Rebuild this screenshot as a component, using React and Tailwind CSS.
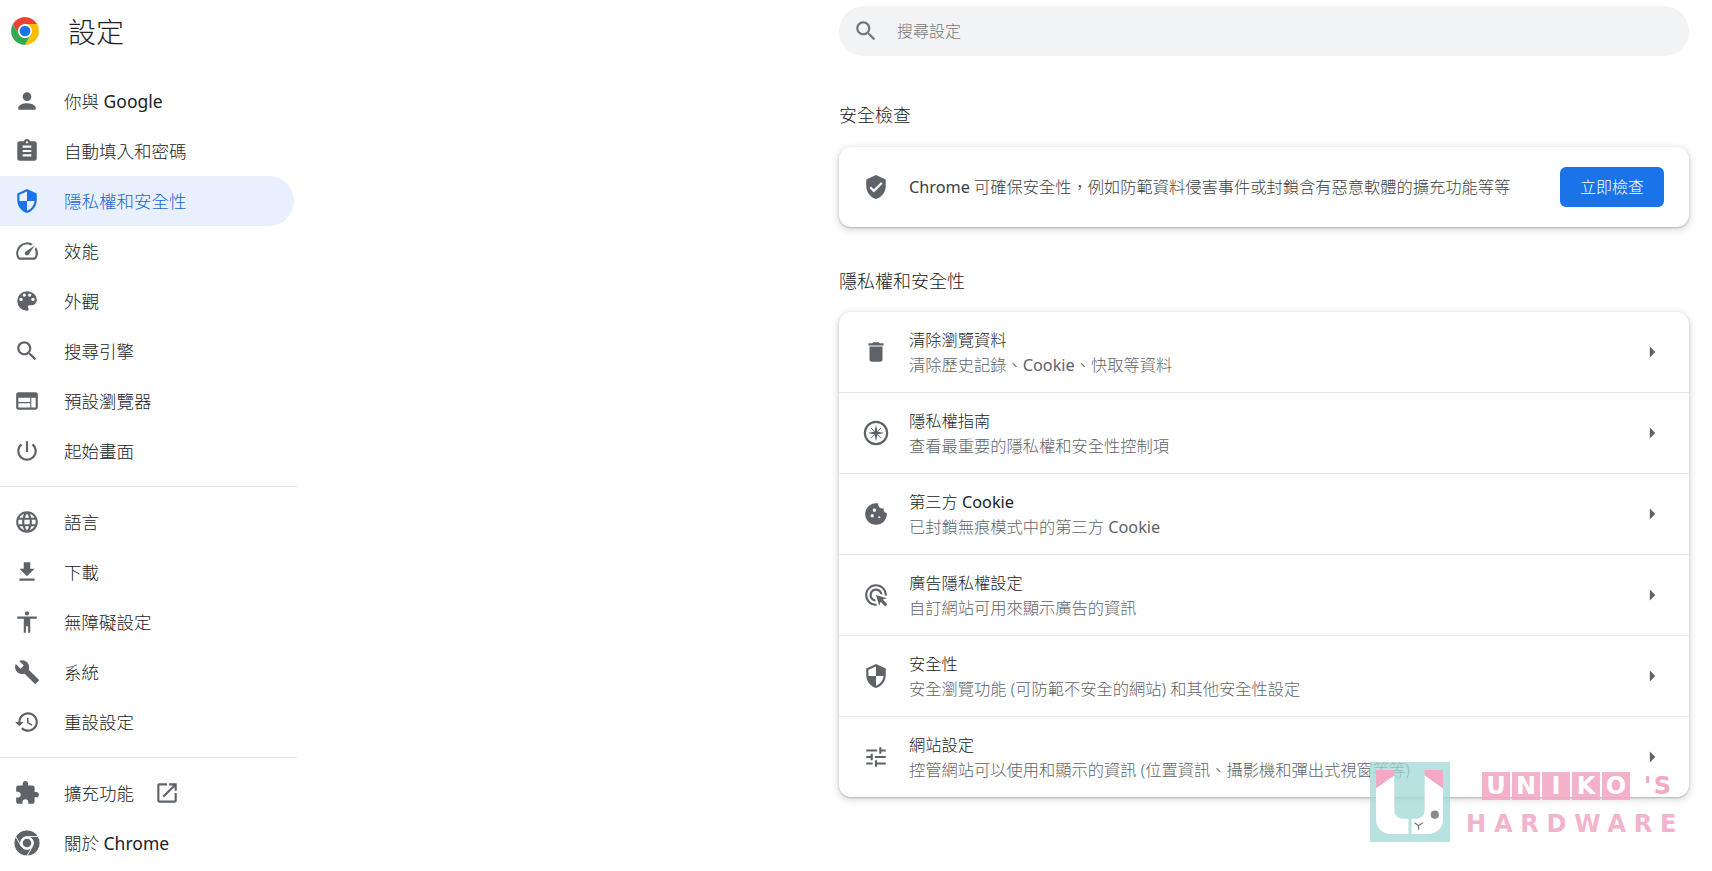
import { Fragment } from "react";

const ICONS = {
  person: "M12 12c2.21 0 4-1.79 4-4s-1.79-4-4-4-4 1.79-4 4 1.79 4 4 4zm0 2c-2.67 0-8 1.34-8 4v2h16v-2c0-2.66-5.33-4-8-4z",
  assignment: "M19 3h-4.18C14.4 1.84 13.3 1 12 1c-1.3 0-2.4.84-2.82 2H5c-1.1 0-2 .9-2 2v14c0 1.1.9 2 2 2h14c1.1 0 2-.9 2-2V5c0-1.1-.9-2-2-2zm-7 0c.55 0 1 .45 1 1s-.45 1-1 1-1-.45-1-1 .45-1 1-1zm4 14H8v-2h8v2zm0-4H8v-2h8v2zm0-4H8V7h8v2z",
  security: "M12 1L3 5v6c0 5.55 3.84 10.74 9 12 5.16-1.26 9-6.45 9-12V5l-9-4zm0 10.99h7c-.53 4.12-3.28 7.79-7 8.94V12H5V6.3l7-3.11v8.8z",
  speed: "M20.38 8.57l-1.23 1.85a8 8 0 0 1-.22 7.58H5.07A8 8 0 0 1 15.58 6.85l1.85-1.23A10 10 0 0 0 3.35 19a2 2 0 0 0 1.72 1h13.85a2 2 0 0 0 1.74-1 10 10 0 0 0-.27-10.44zm-9.79 6.84a2 2 0 0 0 2.83 0l5.66-8.49-8.49 5.66a2 2 0 0 0 0 2.83z",
  palette: "M12 3a9 9 0 0 0 0 18c.83 0 1.5-.67 1.5-1.5 0-.39-.15-.74-.39-1.01-.23-.26-.38-.61-.38-.99 0-.83.67-1.5 1.5-1.5H16c2.76 0 5-2.24 5-5 0-4.42-4.03-8-9-8zm-5.5 9c-.83 0-1.5-.67-1.5-1.5S5.67 9 6.5 9 8 9.67 8 10.5 7.33 12 6.5 12zm3-4C8.67 8 8 7.33 8 6.5S8.67 5 9.5 5s1.5.67 1.5 1.5S10.33 8 9.5 8zm5 0c-.83 0-1.5-.67-1.5-1.5S13.67 5 14.5 5s1.5.67 1.5 1.5S15.33 8 14.5 8zm3 4c-.83 0-1.5-.67-1.5-1.5S16.67 9 17.5 9s1.5.67 1.5 1.5-.67 1.5-1.5 1.5z",
  search: "M15.5 14h-.79l-.28-.27C15.41 12.59 16 11.11 16 9.5 16 5.91 13.09 3 9.5 3S3 5.91 3 9.5 5.91 16 9.5 16c1.61 0 3.09-.59 4.23-1.57l.27.28v.79l5 4.99L20.49 19l-4.99-5zm-6 0C7.01 14 5 11.99 5 9.5S7.01 5 9.5 5 14 7.01 14 9.5 11.99 14 9.5 14z",
  web: "M20 4H4c-1.1 0-1.99.9-1.99 2L2 18c0 1.1.9 2 2 2h16c1.1 0 2-.9 2-2V6c0-1.1-.9-2-2-2zm-5 14H4v-4h11v4zm0-5H4V9h11v4zm5 5h-4V9h4v9z",
  power: "M13 3h-2v10h2V3zm4.83 2.17l-1.42 1.42C17.99 7.86 19 9.81 19 12c0 3.87-3.13 7-7 7s-7-3.13-7-7c0-2.19 1.01-4.14 2.58-5.42L6.17 5.17C4.23 6.82 3 9.26 3 12c0 4.97 4.03 9 9 9s9-4.03 9-9c0-2.74-1.23-5.18-3.17-6.83z",
  language: "M11.99 2C6.47 2 2 6.48 2 12s4.47 10 9.99 10C17.52 22 22 17.52 22 12S17.52 2 11.99 2zm6.93 6h-2.95c-.32-1.25-.78-2.45-1.38-3.56 1.84.63 3.37 1.91 4.33 3.56zM12 4.04c.83 1.2 1.48 2.53 1.91 3.96h-3.82c.43-1.43 1.08-2.76 1.91-3.96zM4.26 14C4.1 13.36 4 12.69 4 12s.1-1.36.26-2h3.38c-.08.66-.14 1.32-.14 2 0 .68.06 1.34.14 2H4.26zm.82 2h2.95c.32 1.25.78 2.45 1.38 3.56-1.84-.63-3.37-1.9-4.33-3.56zm2.95-8H5.08c.96-1.66 2.49-2.93 4.33-3.56C8.81 5.55 8.35 6.75 8.03 8zM12 19.96c-.83-1.2-1.48-2.53-1.91-3.96h3.82c-.43 1.43-1.08 2.76-1.91 3.96zM14.34 14H9.66c-.09-.66-.16-1.32-.16-2 0-.68.07-1.35.16-2h4.68c.09.65.16 1.32.16 2 0 .68-.07 1.34-.16 2zm.25 5.56c.6-1.11 1.06-2.31 1.38-3.56h2.95c-.96 1.65-2.49 2.93-4.33 3.56zM16.36 14c.08-.66.14-1.32.14-2 0-.68-.06-1.34-.14-2h3.38c.16.64.26 1.31.26 2s-.1 1.36-.26 2h-3.38z",
  download: "M19 9h-4V3H9v6H5l7 7 7-7zM5 18v2h14v-2H5z",
  accessibility: "M12 2c1.1 0 2 .9 2 2s-.9 2-2 2-2-.9-2-2 .9-2 2-2zm9 7h-6v13h-2v-6h-2v6H9V9H3V7h18v2z",
  build: "M22.7 19l-9.1-9.1c.9-2.3.4-5-1.5-6.9-2-2-5-2.4-7.4-1.3L9 6 6 9 1.6 4.7C.4 7.1.9 10.1 2.9 12.1c1.9 1.9 4.6 2.4 6.9 1.5l9.1 9.1c.4.4 1 .4 1.4 0l2.3-2.3c.5-.4.5-1.1.1-1.4z",
  restore: "M13 3c-4.97 0-9 4.03-9 9H1l3.89 3.89.07.14L9 12H6c0-3.87 3.13-7 7-7s7 3.13 7 7-3.13 7-7 7c-1.93 0-3.68-.79-4.94-2.06l-1.42 1.42C8.27 19.99 10.51 21 13 21c4.97 0 9-4.03 9-9s-4.03-9-9-9zm-1 5v5l4.28 2.54.72-1.21-3.5-2.08V8H12z",
  extension: "M20.5 11H19V7c0-1.1-.9-2-2-2h-4V3.5C13 2.12 11.88 1 10.5 1S8 2.12 8 3.5V5H4c-1.1 0-1.99.9-1.99 2v3.8H3.5c1.49 0 2.7 1.21 2.7 2.7s-1.21 2.7-2.7 2.7H2V20c0 1.1.9 2 2 2h3.8v-1.5c0-1.49 1.21-2.7 2.7-2.7 1.49 0 2.7 1.21 2.7 2.7V22H17c1.1 0 2-.9 2-2v-4h1.5c1.38 0 2.5-1.12 2.5-2.5S21.88 11 20.5 11z",
  openInNew: "M19 19H5V5h7V3H5c-1.11 0-2 .9-2 2v14c0 1.1.89 2 2 2h14c1.1 0 2-.9 2-2v-7h-2v7zM14 3v2h3.59l-9.83 9.83 1.41 1.41L19 6.41V10h2V3h-7z",
  verified: "M12 1L3 5v6c0 5.55 3.84 10.74 9 12 5.16-1.26 9-6.45 9-12V5l-9-4zm-2 16l-4-4 1.41-1.41L10 14.17l6.59-6.59L18 9l-8 8z",
  trash: "M6 19c0 1.1.9 2 2 2h8c1.1 0 2-.9 2-2V7H6v12zM19 4h-3.5l-1-1h-5l-1 1H5v2h14V4z",
  cookie: "M21.95 10.99c-1.79-.03-3.7-1.95-2.68-4.22-2.97 1-5.78-1.59-5.19-4.56C7.11.74 2 6.41 2 12c0 5.52 4.48 10 10 10 5.89 0 10.54-5.08 9.95-11.01zM8.5 15c-.83 0-1.5-.67-1.5-1.5S7.67 12 8.5 12s1.5.67 1.5 1.5S9.33 15 8.5 15zm2-5C9.67 10 9 9.33 9 8.5S9.67 7 10.5 7s1.5.67 1.5 1.5-.67 1.5-1.5 1.5zm4.5 6c-.55 0-1-.45-1-1s.45-1 1-1 1 .45 1 1-.45 1-1 1z",
  adsClick: "M11.71 17.99C8.53 17.84 6 15.22 6 12c0-3.31 2.69-6 6-6 3.22 0 5.84 2.53 5.99 5.71l-2.1-.63C15.48 9.31 13.89 8 12 8c-2.21 0-4 1.79-4 4 0 1.89 1.31 3.48 3.08 3.89l.63 2.1zM22 12c0 .3-.01.6-.04.9l-1.97-.59c.01-.1.01-.21.01-.31 0-4.42-3.58-8-8-8s-8 3.58-8 8 3.58 8 8 8c.1 0 .21 0 .31-.01l.59 1.97c-.3.03-.6.04-.9.04-5.52 0-10-4.48-10-10S6.48 2 12 2s10 4.48 10 10zm-3.77 4.26L22 15l-10-3 3 10 1.26-3.77 4.27 4.27 1.98-1.98-4.28-4.26z",
  tune: "M3 17v2h6v-2H3zM3 5v2h10V5H3zm10 16v-2h8v-2h-8v-2h-2v6h2zM7 9v2H3v2h4v2h2V9H7zm14 4v-2H11v2h10zm-6-4h2V7h4V5h-4V3h-2v6z",
  arrowRight: "M10 7l5 5-5 5z",
};

const Icon = ({ name, className = "" }) => (
  <svg viewBox="0 0 24 24" fill="currentColor" className={`w-6.5 h-6.5 shrink-0 ${className}`}>
    <path d={ICONS[name]} />
  </svg>
);

const RED = "M12 6H22.39A12 12 0 0 0 1.61 6L6.8 15A6 6 0 0 1 12 6z";
const YELLOW = "M17.2 15L12 24A12 12 0 0 0 22.39 6H12A6 6 0 0 1 17.2 15z";
const GREEN = "M6.8 15L1.61 6A12 12 0 0 0 12 24L17.2 15A6 6 0 0 1 6.8 15z";

const ChromeLogo = () => (
  <svg viewBox="0 0 24 24" className="w-7 h-7 -mt-0.5 -ml-px shrink-0">
    <path d={GREEN} fill="#34a853" />
    <path d={YELLOW} fill="#fbbc04" />
    <path d={RED} fill="#ea4335" />
    <circle cx="12" cy="12" r="4.6" fill="#1a73e8" />
  </svg>
);

const ChromeMono = () => (
  <svg viewBox="0 0 24 24" className="w-6.5 h-6.5 shrink-0 text-[#5f6368]">
    <g fill="currentColor" stroke="#ffffff" strokeWidth="0.7">
      <path d={GREEN} />
      <path d={YELLOW} />
      <path d={RED} />
    </g>
    <circle cx="12" cy="12" r="4" fill="currentColor" />
  </svg>
);

const Compass = () => (
  <svg viewBox="0 0 24 24" className="w-6.5 h-6.5 shrink-0 text-[#5f6368]">
    <circle cx="12" cy="12" r="10.3" fill="none" stroke="currentColor" strokeWidth="2" />
    <path d="M12 4.5l1.4 6.1 6.1 1.4-6.1 1.4-1.4 6.1-1.4-6.1-6.1-1.4 6.1-1.4z" fill="currentColor" />
    <path d="M7.5 7.5l3 3M16.5 7.5l-3 3M7.5 16.5l3-3M16.5 16.5l-3-3" stroke="currentColor" strokeWidth="0.9" />
  </svg>
);

// the CJK text is set light, the latin words stay regular like in the original
const Latin = ({ children }) => <span className="font-normal">{children}</span>;

const navGroups = [
  [
    { icon: "person", label: <>你與 <Latin>Google</Latin></> },
    { icon: "assignment", label: "自動填入和密碼" },
    { icon: "security", label: "隱私權和安全性", active: true },
    { icon: "speed", label: "效能" },
    { icon: "palette", label: "外觀" },
    { icon: "search", label: "搜尋引擎" },
    { icon: "web", label: "預設瀏覽器" },
    { icon: "power", label: "起始畫面" },
  ],
  [
    { icon: "language", label: "語言" },
    { icon: "download", label: "下載" },
    { icon: "accessibility", label: "無障礙設定" },
    { icon: "build", label: "系統" },
    { icon: "restore", label: "重設設定" },
  ],
];

const privacyRows = [
  { icon: "trash", title: "清除瀏覽資料", sub: <>清除歷史記錄、<Latin>Cookie</Latin>、快取等資料</> },
  { custom: <Compass />, title: "隱私權指南", sub: "查看最重要的隱私權和安全性控制項" },
  { icon: "cookie", title: <>第三方 <Latin>Cookie</Latin></>, sub: <>已封鎖無痕模式中的第三方 <Latin>Cookie</Latin></> },
  { icon: "adsClick", title: "廣告隱私權設定", sub: "自訂網站可用來顯示廣告的資訊" },
  { icon: "security", title: "安全性", sub: "安全瀏覽功能 (可防範不安全的網站) 和其他安全性設定" },
  { icon: "tune", title: "網站設定", sub: "控管網站可以使用和顯示的資訊 (位置資訊、攝影機和彈出式視窗等等)" },
];

const NavRow = ({ icon, label, active, children }) => (
  <div
    className={`flex items-center gap-6 h-12.5 pl-3.5 mr-0.75 rounded-r-full text-[17.5px] ${
      active ? "bg-[#e8f0fe] text-[#1967d2]" : "text-[#202124]"
    }`}
  >
    {typeof icon === "string" ? (
      <Icon name={icon} className={active ? "text-[#1a73e8]" : "text-[#5f6368]"} />
    ) : (
      icon
    )}
    <span>{label}</span>
    {children}
  </div>
);

const cardClass =
  "bg-white rounded-xl shadow-[0_1px_2px_0_rgba(60,64,67,0.3),0_2px_6px_2px_rgba(60,64,67,0.15)]";

const Watermark = () => (
  <div className="absolute top-190 left-342.5 w-80 h-21 pointer-events-none">
    <svg viewBox="0 0 79 79" className="absolute left-0 top-0.5 w-20 h-20">
      <rect width="79" height="79" fill="#9fd8d4" opacity="0.75" />
      <path d="M6 26V57a14 14 0 0 0 14 14H38V56H32a8 8 0 0 1-8-8V13z" fill="#ffffff" />
      <path d="M54 13L72 26V57a14 14 0 0 1-14 14H41V56H46a8 8 0 0 0 8-8z" fill="#ffffff" />
      <path d="M6 8H24V13L6 26z" fill="#f2a9c4" />
      <path d="M54 8H72V26L54 13z" fill="#f2a9c4" />
      <circle cx="64" cy="52" r="4" fill="#8a8a8a" />
      <path d="M44 60l4 3 4-3M48 63v4" fill="none" stroke="#777777" strokeWidth="1.2" />
    </svg>
    <div className="absolute left-28 top-3 flex items-center gap-0.5 font-['DejaVu_Sans'] font-bold text-2xl text-white leading-none">
      {["U", "N", "I", "K", "O"].map((c) => (
        <span key={c} className="flex items-center justify-center w-7 h-7 bg-[#f2a9c4]/90">
          {c}
        </span>
      ))}
      <span className="ml-3 tracking-widest text-[#f2a9c4]">'S</span>
    </div>
    <div className="absolute left-24 top-13 font-['DejaVu_Sans'] font-bold text-2xl tracking-[0.325em] text-[#f2b4cc] leading-none">
      HARDWARE
    </div>
  </div>
);

const App = () => {
  return (
    <div className="relative flex h-[871px] overflow-hidden bg-white font-light font-['Noto_Sans','Noto_Sans_CJK_TC',sans-serif]">
      <aside className="w-[297px] shrink-0">
        <div className="flex items-center gap-7 h-16 pl-3">
          <ChromeLogo />
          <h1 className="ml-px text-[28px] font-light text-[#202124]">設定</h1>
        </div>
        <nav className="mt-3">
          {navGroups.map((group, i) => (
            <Fragment key={i}>
              {group.map((item) => (
                <NavRow key={item.icon} {...item} />
              ))}
              <div className="h-px mt-2.5 mb-2.5 bg-gray-200" />
            </Fragment>
          ))}
          <NavRow icon="extension" label="擴充功能">
            <Icon name="openInNew" className="-ml-1 text-[#5f6368]" />
          </NavRow>
          <NavRow icon={<ChromeMono />} label={<>關於 <Latin>Chrome</Latin></>} />
        </nav>
      </aside>

      <main className="ml-auto mr-[23px] w-[850px] text-[16.25px]">
        <div className="flex items-center gap-4.5 h-12.5 mt-1.5 pl-3.5 rounded-full bg-[#f1f3f4] text-[#757575]">
          <Icon name="search" className="text-[#757575]" />
          <span className="text-base">搜尋設定</span>
        </div>

        <h2 className="mt-11.25 mb-4.5 text-lg leading-7 font-light text-[#202124]">安全檢查</h2>
        <section className={`flex items-center justify-between h-20 pl-6 pr-6.25 ${cardClass}`}>
          <div className="flex items-center gap-5 text-[#3c4043]">
            <Icon name="verified" className="text-[#5f6368]" />
            <span><Latin>Chrome</Latin> 可確保安全性，例如防範資料侵害事件或封鎖含有惡意軟體的擴充功能等等</span>
          </div>
          <button className="h-10 w-26 rounded-md bg-[#1a73e8] text-white text-base">立即檢查</button>
        </section>

        <h2 className="mt-10 mb-4.25 text-lg leading-7 font-light text-[#202124]">隱私權和安全性</h2>
        <section className={cardClass}>
          {privacyRows.map((row, i) => (
            <div
              key={i}
              className={`flex items-center gap-5 h-20 pl-6 pr-6 ${
                i > 0 ? "h-[81px] border-t border-gray-200" : ""
              }`}
            >
              {row.custom || <Icon name={row.icon} className="text-[#5f6368]" />}
              <div className="flex flex-col gap-px flex-1 leading-6">
                <span className="text-[#202124]">{row.title}</span>
                <span className="text-[#5f6368]">{row.sub}</span>
              </div>
              <Icon name="arrowRight" className="text-[#5f6368]" />
            </div>
          ))}
        </section>
      </main>

      <Watermark />
    </div>
  );
};

export default App;
